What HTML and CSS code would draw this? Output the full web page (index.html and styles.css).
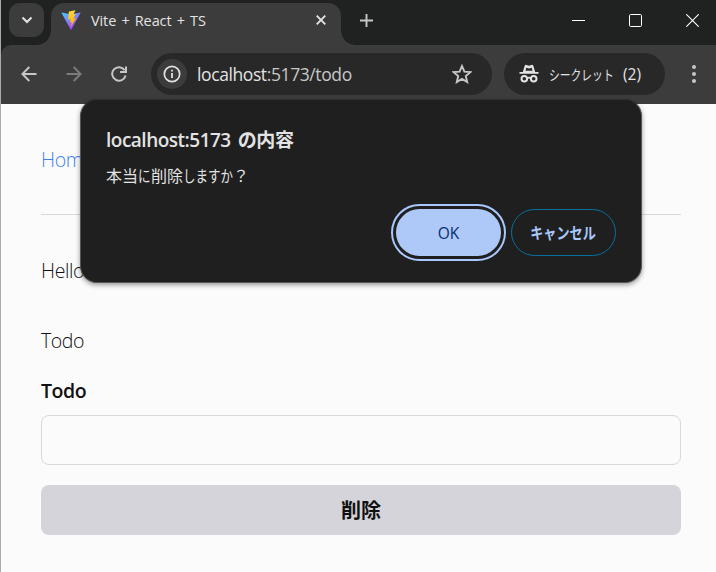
FILE: index.html
```
<!DOCTYPE html>
<html lang="ja">
<head>
<meta charset="utf-8">
<title>Vite + React + TS</title>
<link rel="stylesheet" href="styles.css">
</head>
<body>
<div class="window">
  <header class="tabstrip">
    <button class="tab-search" aria-label="タブを検索"><svg width="12" height="8" viewBox="0 0 12 8"><path d="M1.5 1.5 6 6l4.500-4.500" fill="none" stroke="#e3e3e3" stroke-width="2"/></svg></button>
    <div class="tab">
      <svg class="vite" width="20" height="21" viewBox="0 0 20 21">
        <defs>
          <linearGradient id="v" x1="0" y1="0" x2=".65" y2="1"><stop offset="0" stop-color="#41d1ff"/><stop offset="1" stop-color="#bd34fe"/></linearGradient>
          <linearGradient id="b" x1="0" y1="0" x2="0" y2="1"><stop offset="0" stop-color="#ffdd35"/><stop offset="1" stop-color="#ffa800"/></linearGradient>
        </defs>
        <path d="M.3 2.500 10 4.200l9.700-1.700L10.400 19.400Q10 20.100 9.600 19.400Z" fill="url(#v)"/>
        <path d="m14.500.2-6.600 1.300-.8 8.200 2.500-.4-.7 3.400 1.900-.5-1 4.900 5.200-9.100-2.700.4 2.500-4.200-2.300.1Z" fill="url(#b)"/>
      </svg>
      <span class="tab-title">Vite + React + TS</span>
      <svg class="tab-close" width="10" height="10" viewBox="0 0 10 10"><path d="m.7.700 8.600 8.600M9.300.7.700 9.300" stroke="#e3e3e3" stroke-width="1.900"/></svg>
    </div>
    <svg class="new-tab" width="13" height="13" viewBox="0 0 13 13"><path d="M6.500 0v13M0 6.500h13" stroke="#c7c7c7" stroke-width="1.900"/></svg>
    <div class="controls">
      <svg width="13" height="13" viewBox="0 0 13 13"><path d="M0 6.500h13" stroke="#fff"/></svg>
      <svg width="13" height="13" viewBox="0 0 13 13"><rect x=".5" y=".5" width="12" height="12" rx="1.200" fill="none" stroke="#fff"/></svg>
      <svg width="13" height="13" viewBox="0 0 13 13"><path d="m.3.300 12.400 12.400M12.700.3.300 12.700" stroke="#fff" stroke-width="1.100"/></svg>
    </div>
  </header>
  <div class="toolbar">
    <svg class="nav" width="16" height="16" viewBox="0 0 16 16"><path d="M15.500 8H1.800M8.300 1 1.400 8l6.900 7" fill="none" stroke="#c7c7c7" stroke-width="1.900"/></svg>
    <svg class="nav" width="16" height="16" viewBox="0 0 16 16"><path d="M.5 8h13.700M7.700 1l6.900 7-6.900 7" fill="none" stroke="#7c7c7c" stroke-width="1.900"/></svg>
    <svg class="nav" width="16" height="16" viewBox="0 0 16 16"><path d="M13.600 4.100A6.800 6.800 0 1 0 14.600 9.600M15 .5v5.600H9" fill="none" stroke="#c7c7c7" stroke-width="2"/></svg>
    <div class="omnibox">
      <span class="site-info"><svg width="18" height="18" viewBox="0 0 18 18"><circle cx="9" cy="9" r="7.700" fill="none" stroke="#e3e3e3" stroke-width="1.700"/><path d="M9 8v5M9 4.700v1.900" stroke="#e3e3e3" stroke-width="1.800"/></svg></span>
      <span class="url"><b>localhost</b>:5173/todo</span>
      <svg class="star" width="20" height="20" viewBox="0 0 20 20"><path d="m10 2 2.400 5.600 6 .5-4.600 4 1.400 5.900L10 14.900 4.800 18l1.400-5.900-4.600-4 6-.5Z" fill="none" stroke="#c7c7c7" stroke-width="1.900"/></svg>
    </div>
    <div class="incognito">
      <svg width="20" height="19" viewBox="0 0 20 19"><path d="M3.800 8 5.700 1.700Q6.200.4 7.500.900L10 1.800l2.500-.9Q13.800.4 14.300 1.700L16.200 8H19.500v1.800H.5V8Z" fill="#e3e3e3"/><path d="M7.300 3.700 6.500 6.800h7l-.8-3.100-2.700.9Z" fill="#282828"/><circle cx="5.300" cy="14.800" r="2.800" fill="none" stroke="#e3e3e3" stroke-width="2"/><circle cx="14.700" cy="14.800" r="2.800" fill="none" stroke="#e3e3e3" stroke-width="2"/><path d="M8 14.400q2-1.400 4 0" fill="none" stroke="#e3e3e3" stroke-width="1.700"/></svg>
      <span class="incognito-text">シークレット</span><span class="incognito-count">(2)</span>
    </div>
    <svg class="more" width="4" height="18" viewBox="0 0 4 18"><g fill="#c7c7c7"><circle cx="2" cy="2" r="2"/><circle cx="2" cy="9" r="2"/><circle cx="2" cy="16" r="2"/></g></svg>
  </div>
  <main class="page">
    <nav><a class="home">Home</a></nav>
    <p class="hello">Hello</p>
    <p class="heading">Todo</p>
    <label class="label" for="todo">Todo</label>
    <input class="field" id="todo">
    <button class="delete">削除</button>
  </main>
</div>
<section class="dialog" role="dialog">
  <h1><span class="host">localhost:5173</span><span class="host-ja">の内容</span></h1>
  <p class="message"><span>本当</span><span class="kana ni">に</span><span>削除</span><span class="kana">しますか</span><span class="question">？</span></p>
  <div class="actions">
    <button class="ok">OK</button>
    <button class="cancel"><span>キャンセル</span></button>
  </div>
</section>
</body>
</html>
```
FILE: styles.css
```
* { box-sizing: border-box; }
body { margin: 0; overflow: hidden; background: #202221; font-family: "Open Sans", "Noto Sans CJK JP", sans-serif; }
button { border: 0; padding: 0; font-family: inherit; }
svg { display: block; flex: none; }
p, h1 { margin: 0; }
.window { width: 716px; height: 572px; display: flex; flex-direction: column; border-left: 1px solid #aaa; }
.tabstrip { height: 45px; display: flex; align-items: flex-start; padding: 3px 11px 0 8px; background: #202221; }
.tab-search { width: 35px; height: 34px; border-radius: 11px; background: #3c3c3c; display: grid; place-items: center; }
.tab { position: relative; width: 290px; height: 42px; margin-left: 7px; padding: 7px 15px 0 10px; display: flex; align-items: flex-start; border-radius: 13px 13px 0 0; background: #3c3c3c; }
.tab::before, .tab::after { content: ""; position: absolute; bottom: 0; width: 14px; height: 14px; }
.tab::before { left: -14px; background: radial-gradient(circle at 0 0, transparent 13.5px, #3c3c3c 14px); }
.tab::after { right: -14px; background: radial-gradient(circle at 100% 0, transparent 13.5px, #3c3c3c 14px); }
.tab-title { margin-left: 10px; font-size: 14.5px; line-height: 21px; color: #e3e3e3; white-space: nowrap; letter-spacing: -.1px; word-spacing: 1.5px; }
.tab-close { margin: 5px 0 0 auto; }
.new-tab { margin: 11px 0 0 19px; }
.controls { margin: 11px 0 0 auto; display: flex; gap: 44px; padding-right: 6px; }
.toolbar { height: 59px; display: flex; align-items: center; padding: 0 20.5px 1px 19.5px; background: #3c3c3c; border-top-left-radius: 10px; }
.nav { margin-right: 29px; }
.nav:nth-child(3) { margin-right: 24.5px; }
.omnibox { width: 341px; height: 42px; display: flex; align-items: center; padding: 0 20px 0 6px; border-radius: 21px; background: #282828; }
.site-info { width: 30px; height: 30px; border-radius: 50%; background: #3c3c3c; display: grid; place-items: center; }
.url { margin-left: 10px; font-size: 17.5px; line-height: 24px; color: #c7c7c7; white-space: nowrap; letter-spacing: -.4px; }
.url b { font-weight: 400; color: #e3e3e3; }
.star { margin-left: auto; }
.incognito { width: 161px; height: 42px; margin-left: 12px; padding-left: 15px; display: flex; align-items: center; border-radius: 21px; background: #282828; color: #e3e3e3; font-size: 14px; white-space: nowrap; }
.incognito svg { margin-top: -2px; }
.incognito-text { display: block; width: 66px; margin-left: 10px; font-size: 14px; transform: scaleX(.77); transform-origin: 0 50%; }
.incognito-count { margin-left: 8px; font-size: 15.5px; }
.more { margin-left: auto; }
.page { flex: 1; display: flex; flex-direction: column; padding: 40px 35px 0 40px; background: #fbfbfb; color: #111; font-size: 19.5px; font-weight: 350; line-height: 32px; letter-spacing: -.4px; }
.page nav { height: 71px; border-bottom: 1px solid #d9d9d9; }
.home { color: #3b82f6; }
.hello { margin-top: 40px; }
.heading { margin-top: 38px; }
.label { margin-top: 18px; font-weight: 600; }
.field { width: 100%; height: 50px; margin: 8px 0 20px; border: 1px solid #d9d9d9; border-radius: 8px; background: #fbfbfb; }
.delete { height: 50px; border-radius: 8px; background: #d4d4da; color: #111; font: 700 20px/50px "Noto Sans CJK JP", sans-serif; }
.dialog { position: absolute; left: 80px; top: 99px; width: 562px; height: 184px; padding: 26px 25px 26px; border: 1px solid #555; border-top-color: #303030; border-radius: 17px; background: #1f1f1f; color: #e3e3e3; box-shadow: 0 2px 5px #0006; display: flex; flex-direction: column; }
.dialog h1 { display: flex; gap: 7px; font-size: 19px; line-height: 28px; font-weight: 600; letter-spacing: -.5px; white-space: nowrap; }
.host-ja { font-size: 19px; font-weight: 700; letter-spacing: -.4px; }
.message { display: flex; margin-top: 9px; font: 16px/24px "Noto Sans CJK JP", sans-serif; white-space: nowrap; }
.kana { width: 50px; transform: scaleX(.78); transform-origin: 0 50%; }
.ni { width: 13px; }
.question { margin-left: 0; }
.actions { margin-top: auto; display: flex; justify-content: flex-end; gap: 10px; }
.ok, .cancel { width: 105px; height: 47px; border-radius: 24px; font-size: 15.5px; font-weight: 500; }
.ok { background: #aec9f8; color: #062e6f; outline: 2px solid #a8c7fa; outline-offset: 3px; }
.cancel { border: 1px solid #0870a0; background: transparent; color: #a8c7fa; white-space: nowrap; display: grid; place-items: center; }
.cancel span { transform: translateY(-1px) scaleX(.82); font-size: 16px; font-weight: 700; }
```
